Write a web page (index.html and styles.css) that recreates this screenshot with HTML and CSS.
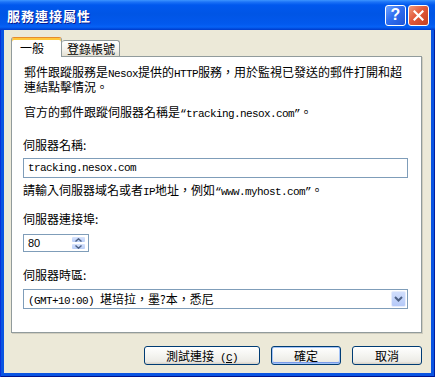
FILE: index.html
```html
<!DOCTYPE html>
<html lang="zh-Hant">
<head>
  <meta charset="UTF-8" />
  <title>服務連接屬性</title>
  <link rel="stylesheet" href="styles.css">
</head>
<body>
  <div class="window">
    <div class="titlebar">
      <span class="title">服務連接屬性</span>
      <div class="caption-btns">
        <span class="cap-btn help">?</span>
        <span class="cap-btn close">
          <svg width="11" height="11" viewBox="0 0 11 11"><path d="M1.5 1.5 L9.5 9.5 M9.5 1.5 L1.5 9.5" stroke="#fff" stroke-width="2.2" stroke-linecap="square"/></svg>
        </span>
      </div>
    </div>

    <div class="client">
      <div class="tabs">
        <div class="tab active">一般</div>
        <div class="tab">登錄帳號</div>
      </div>

      <div class="panel">
        <p class="desc">郵件跟蹤服務是<span class="en">Nesox</span>提供的<span class="en">HTTP</span>服務，用於監視已發送的郵件打開和超<br>連結點擊情況。</p>
        <p class="desc official">官方的郵件跟蹤伺服器名稱是<span class="en">“tracking.nesox.com”</span>。</p>

        <label class="field-label name-label">伺服器名稱:</label>
        <div class="textbox"><span class="en">tracking.nesox.com</span></div>
        <p class="hint">請輸入伺服器域名或者<span class="en">IP</span>地址，例如<span class="en">“www.myhost.com”</span>。</p>

        <label class="field-label port-label">伺服器連接埠:</label>
        <div class="spinner">
          <span class="num">80</span>
          <span class="spin-btns">
            <span class="spin-btn"><svg width="7" height="4" viewBox="0 0 7 4"><path d="M0.5 3.5 L3.5 0.8 L6.5 3.5" fill="none" stroke="#4d6185" stroke-width="1.4"/></svg></span>
            <span class="spin-btn"><svg width="7" height="4" viewBox="0 0 7 4"><path d="M0.5 0.5 L3.5 3.2 L6.5 0.5" fill="none" stroke="#4d6185" stroke-width="1.4"/></svg></span>
          </span>
        </div>

        <label class="field-label zone-label">伺服器時區:</label>
        <div class="combo">
          <span class="combo-text"><span class="en">(GMT+10:00) </span>堪培拉，墨?本，悉尼</span>
          <span class="drop-btn"><svg width="9" height="6" viewBox="0 0 9 6"><path d="M1 1 L4.5 4.5 L8 1" fill="none" stroke="#4d6185" stroke-width="2"/></svg></span>
        </div>
      </div>

      <div class="buttons">
        <button class="btn test">測試連接<span class="en"> (<u>C</u>)</span></button>
        <button class="btn default">確定</button>
        <button class="btn">取消</button>
      </div>
    </div>
  </div>
</body>
</html>
```

FILE: styles.css
```css
body {
  margin: 0;
  font-family: "Noto Sans CJK TC", "Liberation Sans", sans-serif;
  font-size: 12px;
  color: #000;
}
.window {
  width: 435px;
  height: 377px;
  display: flex;
  flex-direction: column;
  background: #0a54e2;
  box-shadow: inset 1px 0 #0831d9, inset -1px 0 #001ea0, inset 0 -1px #00138c;
}
.titlebar {
  height: 30px;
  flex: none;
  display: flex;
  align-items: center;
  justify-content: space-between;
  padding: 0 6px 0 7px;
  background: linear-gradient(#3d95ff 0, #1c73f7 2px, #0058ee 5px, #0055e5 14px, #0259ee 24px, #0662f6 27px, #0047d8 29px, #003acb 30px);
}
.title {
  color: #fff;
  font-weight: bold;
  font-size: 13px;
  letter-spacing: 1px;
  text-shadow: 1px 1px #0a1b8f;
}
.caption-btns {
  display: flex;
  gap: 2px;
}
.cap-btn {
  width: 19px;
  height: 19px;
  border: 1px solid #fff;
  border-radius: 3px;
  display: flex;
  align-items: center;
  justify-content: center;
  color: #fff;
  font-family: "Liberation Sans", sans-serif;
  font-weight: bold;
  font-size: 16px;
}
.help {
  background: linear-gradient(135deg, #6fa2ff 0, #2f6ef0 45%, #1f55d6 100%);
}
.close {
  background: linear-gradient(135deg, #f09a7c 0, #e2593a 45%, #c5401f 100%);
}

.client {
  flex: 1;
  margin: 0 4px 4px 4px;
  background: #ece9d8;
  padding: 7px 9px 0 7px;
  display: flex;
  flex-direction: column;
}
.tabs {
  height: 19px;
  display: flex;
  align-items: flex-end;
}
.tab {
  height: 16px;
  box-sizing: border-box;
  padding: 0 4px 0 5px;
  border: 1px solid #919b9c;
  border-bottom: none;
  border-left: none;
  border-radius: 3px 3px 0 0;
  background: linear-gradient(#ffffff, #f3f2ec 60%, #e3e0d2);
  line-height: 15px;
}
.tab.active {
  position: relative;
  z-index: 1;
  width: 51px;
  height: 20px;
  margin-bottom: -1px;
  padding-left: 8px;
  border-left: 1px solid #919b9c;
  border-top: 1px solid #e68b2c;
  box-shadow: inset 0 2px #ffc73c;
  background: #fff;
  line-height: 20px;
}
.panel {
  height: 277px;
  box-sizing: border-box;
  flex: none;
  background: #fff;
  border: 1px solid #919b9c;
  box-shadow: 1px 1px #d0cdbe;
  padding: 8px 12px 0 11px;
  display: flex;
  flex-direction: column;
  align-items: flex-start;
  line-height: 14px;
}
.en {
  font-family: "Liberation Mono", monospace;
  font-size: 11px;
  letter-spacing: -0.6px;
  line-height: 1;
}
.desc {
  margin: 0;
  padding-left: 1px;
}
.official {
  margin-top: 11px;
}
.field-label {
  display: block;
}
.name-label {
  margin-top: 18px;
}
.port-label {
  margin-top: 14px;
}
.zone-label {
  margin-top: 16px;
}
.textbox {
  margin-top: 6px;
  width: 385px;
  height: 20px;
  box-sizing: border-box;
  border: 1px solid #7f9db9;
  padding-left: 4px;
  display: flex;
  align-items: center;
}
.hint {
  margin: 5px 0 0 0;
}
.spinner {
  margin-top: 8px;
  width: 66px;
  height: 18px;
  box-sizing: border-box;
  border: 1px solid #7f9db9;
  display: flex;
  justify-content: space-between;
  padding: 1px 2px 1px 4px;
}
.num {
  font-family: "Liberation Sans", sans-serif;
  font-size: 11px;
  line-height: 14px;
}
.spin-btns {
  width: 15px;
  display: flex;
  flex-direction: column;
}
.spin-btn {
  flex: 1;
  display: flex;
  align-items: center;
  justify-content: center;
  background: linear-gradient(#d8e4fd, #b8cdf8);
  border: 1px solid #fff;
  border-radius: 2px;
}
.combo {
  margin-top: 7px;
  width: 385px;
  height: 20px;
  box-sizing: border-box;
  border: 1px solid #7f9db9;
  padding: 1px 1px 1px 4px;
  display: flex;
  align-items: center;
  justify-content: space-between;
}
.drop-btn {
  width: 15px;
  height: 16px;
  box-sizing: border-box;
  display: flex;
  align-items: center;
  justify-content: center;
  background: linear-gradient(#d1defc, #b5c9f8);
  border: 1px solid #e6edfd;
  border-radius: 2px;
}

.buttons {
  margin-top: 13px;
  display: flex;
  justify-content: flex-end;
  gap: 11px;
}
.btn {
  width: 70px;
  height: 19px;
  padding: 0;
  border: 1px solid #003c74;
  border-radius: 3px;
  background: linear-gradient(#ffffff, #f4f4f0 50%, #ecebe6 85%, #d6d0c5);
  font-family: "Noto Sans CJK TC", sans-serif;
  font-size: 12px;
  line-height: 17px;
  color: #000;
}
.btn.test {
  width: 116px;
}
.btn.default {
  box-shadow: inset 0 0 0 1px #a5c4f7, inset 0 -1px 0 1px #7a9cea;
}
```
